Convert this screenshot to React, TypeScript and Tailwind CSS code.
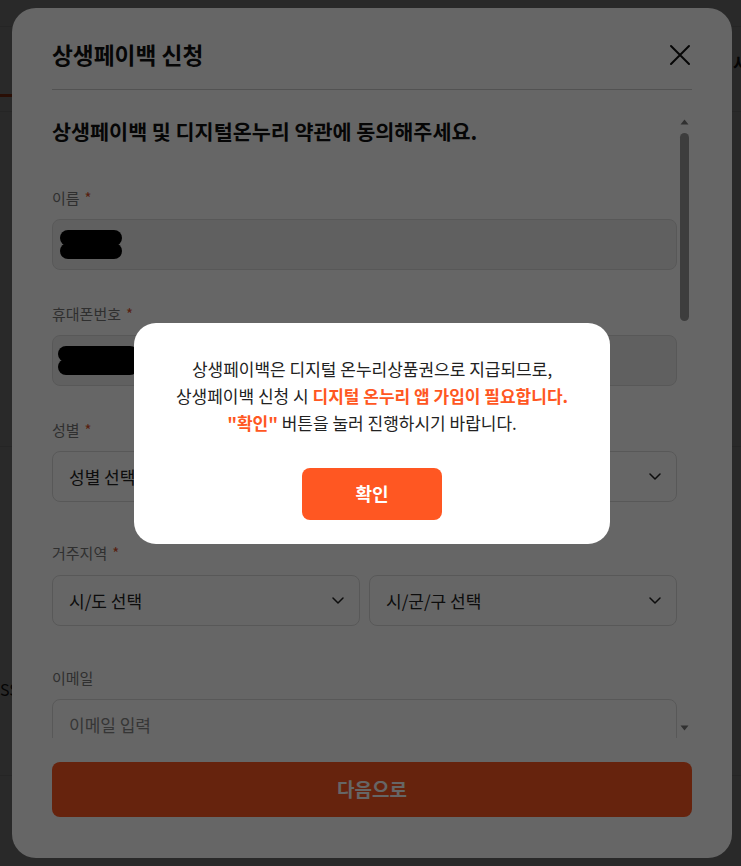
import React from "react";

const ORANGE = "#ff5722";

const Chevron = () => (
  <svg width="12" height="7" viewBox="0 0 12 7" fill="none" className="shrink-0">
    <path d="M1 1L6 6L11 1" stroke="#222" strokeWidth="1.5" strokeLinecap="round" strokeLinejoin="round" />
  </svg>
);

const Redacted = ({ w }: { w: string }) => (
  <div className={`flex flex-col ${w}`}>
    <div className="h-[16px] w-full rounded-full bg-black" />
    <div className="-mt-[3px] h-[16px] w-full rounded-full bg-black" />
  </div>
);

const Label = ({ text, required }: { text: string; required?: boolean }) => (
  <div className="text-[15px] leading-[22px] text-[#777]">
    {text}
    {required && <span className="ml-[5px] text-[#d9502a]">*</span>}
  </div>
);

const Select = ({ text, className }: { text: string; className?: string }) => (
  <div
    className={`flex h-[51px] items-center justify-between rounded-[8px] border border-[#dddddd] bg-white pl-[16px] pr-[15px] ${className ?? ""}`}
  >
    <span className="text-[17px] text-[#222]">{text}</span>
    <Chevron />
  </div>
);

const BackgroundPage = () => (
  <div className="min-h-screen bg-white text-[#222]">
    <div className="h-[27px] border-b border-[#e5e5e5]" />
    <div className="flex h-[70px] items-end">
      <div className="h-[3px] w-[40px] bg-[#ff5722]" />
      <div className="flex-1" />
      <span className="mb-[22px] w-[8px] overflow-hidden whitespace-nowrap text-[17px] font-bold">
        사업안내
      </span>
    </div>
    <div className="h-[15px] border-b border-[#e5e5e5]" />
    <div className="h-[335px] border-b border-[#e5e5e5]" />
    <div className="pt-[230px] text-[16px]">SSS</div>
    <div className="h-[75px] border-b border-[#e5e5e5]" />
  </div>
);

const Scrollbar = () => (
  <div className="flex w-[15px] shrink-0 flex-col items-center pb-[2px]">
    <div className="flex h-[16px] items-center justify-center">
      <svg width="9" height="6" viewBox="0 0 9 6">
        <path d="M4.5 0.5L8.5 5.5H0.5Z" fill="#7a7a7a" />
      </svg>
    </div>
    <div className="mt-[3px] h-[188px] w-[9px] rounded-full bg-[#999]" />
    <div className="flex-1" />
    <div className="flex h-[16px] items-center justify-center">
      <svg width="9" height="6" viewBox="0 0 9 6">
        <path d="M0.5 0.5H8.5L4.5 5.5Z" fill="#7a7a7a" />
      </svg>
    </div>
  </div>
);

const ApplyModal = () => (
  <div className="flex h-[850px] w-[720px] flex-col rounded-[24px] bg-white px-[40px]">
    <div className="flex items-center justify-between border-b border-[#cccccc] pb-[18px] pt-[31px]">
      <h2 className="text-[22.7px] font-bold leading-[32px] text-[#111]">상생페이백 신청</h2>
      <svg width="22" height="22" viewBox="0 0 22 22" fill="none" className="mr-[1px]">
        <path d="M2 2L20 20M20 2L2 20" stroke="#111" strokeWidth="2" strokeLinecap="round" />
      </svg>
    </div>

    <div className="mt-[24px] flex min-h-0 flex-1 overflow-hidden">
      <div className="w-[625px] shrink-0">
        <h3 className="text-[20.7px] font-bold leading-[34px] text-[#111]">
          상생페이백 및 디지털온누리 약관에 동의해주세요.
        </h3>

        <div className="mt-[39px]">
          <Label text="이름" required />
          <div className="mt-[10px] flex h-[51px] items-center rounded-[8px] border border-[#dddddd] bg-[#f0f0f0] pl-[7px]">
            <Redacted w="w-[62px]" />
          </div>
        </div>

        <div className="mt-[33px]">
          <Label text="휴대폰번호" required />
          <div className="mt-[10px] flex h-[51px] items-center rounded-[8px] border border-[#dddddd] bg-[#f0f0f0] pl-[5px]">
            <Redacted w="w-[80px]" />
          </div>
        </div>

        <div className="mt-[33px]">
          <Label text="성별" required />
          <Select text="성별 선택" className="mt-[10px]" />
        </div>

        <div className="mt-[40px]">
          <Label text="거주지역" required />
          <div className="mt-[11px] grid grid-cols-2 gap-[9px]">
            <Select text="시/도 선택" />
            <Select text="시/군/구 선택" />
          </div>
        </div>

        <div className="mt-[41px]">
          <Label text="이메일" />
          <div className="mt-[10px] flex h-[51px] items-center rounded-[8px] border border-[#dddddd] bg-white pl-[16px]">
            <span className="text-[17px] text-[#888]">이메일 입력</span>
          </div>
        </div>
      </div>
      <Scrollbar />
    </div>

    <div className="pb-[41px] pt-[24px]">
      <button className="flex h-[55px] w-full items-center justify-center rounded-[8px] bg-[#ff5722] text-[19px] font-bold text-white">
        다음으로
      </button>
    </div>
  </div>
);

const NoticeDialog = () => (
  <div className="flex w-[476px] flex-col items-center rounded-[22px] bg-white pb-[24px] pt-[32px]">
    <p className="text-center text-[17px] leading-[27px] text-[#222]">
      상생페이백은 디지털 온누리상품권으로 지급되므로,
      <br />
      상생페이백 신청 시{" "}
      <b className="font-bold" style={{ color: ORANGE }}>
        디지털 온누리 앱 가입이 필요합니다.
      </b>
      <br />
      <b className="font-bold" style={{ color: ORANGE }}>
        "확인"
      </b>{" "}
      버튼을 눌러 진행하시기 바랍니다.
    </p>
    <button className="mt-[32px] flex h-[52px] w-[140px] items-center justify-center rounded-[8px] bg-[#ff5722] text-[18px] font-bold text-white">
      확인
    </button>
  </div>
);

export default function App() {
  return (
    <div className="relative font-['Noto_Sans_CJK_KR','Noto_Sans',sans-serif]">
      <BackgroundPage />
      <div className="fixed inset-0 bg-black/60 pl-[12px] pt-[8px]">
        <ApplyModal />
      </div>
      <div className="fixed inset-0 flex items-center justify-center bg-black/60 pl-[3px]">
        <NoticeDialog />
      </div>
    </div>
  );
}
